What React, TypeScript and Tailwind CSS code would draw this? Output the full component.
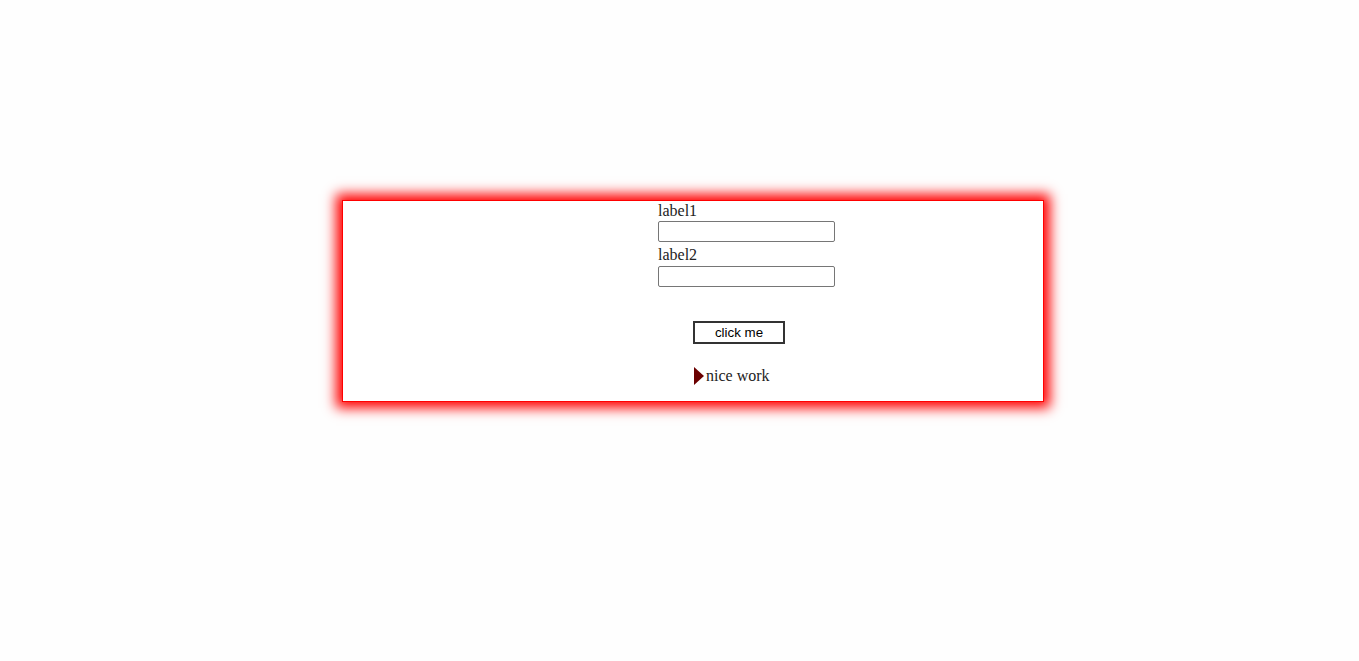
export default function App() {
  return (
    <div className="min-h-[661px] w-full bg-[#fefefe] pt-[200px]">
      <div className="ml-[342px] box-border h-[202px] w-[702px] border border-[#ff0000] bg-white shadow-[0_0_12px_6px_#ff0000]">
        <div className="flex flex-col pl-[315px] font-['Liberation_Serif',serif] text-[16px] text-[#222]">
          <label className="h-[20px] leading-[19px]">label1</label>
          <input className="box-border h-[21px] w-[177px] rounded-[2px] border border-[#767676] bg-white" />
          <label className="mt-[4px] h-[20px] leading-[18px]">label2</label>
          <input className="box-border h-[21px] w-[177px] rounded-[2px] border border-[#767676] bg-white" />
        </div>
        <div className="mt-[32px] pl-[350px]">
          <button className="box-border h-[23px] w-[92px] border-2 border-[#333] bg-white font-['Liberation_Sans',sans-serif] text-[13.33px] leading-none text-black">
            click me
          </button>
        </div>
        <div className="mt-[22px] flex items-center pl-[351px] font-['Liberation_Serif',serif] text-[16px] leading-[20px] text-[#222]">
          <span className="mr-[2px] h-0 w-0 border-y-[9px] border-l-[10px] border-y-transparent border-l-[#6b0000]" />
          <span>nice work</span>
        </div>
      </div>
    </div>
  );
}
